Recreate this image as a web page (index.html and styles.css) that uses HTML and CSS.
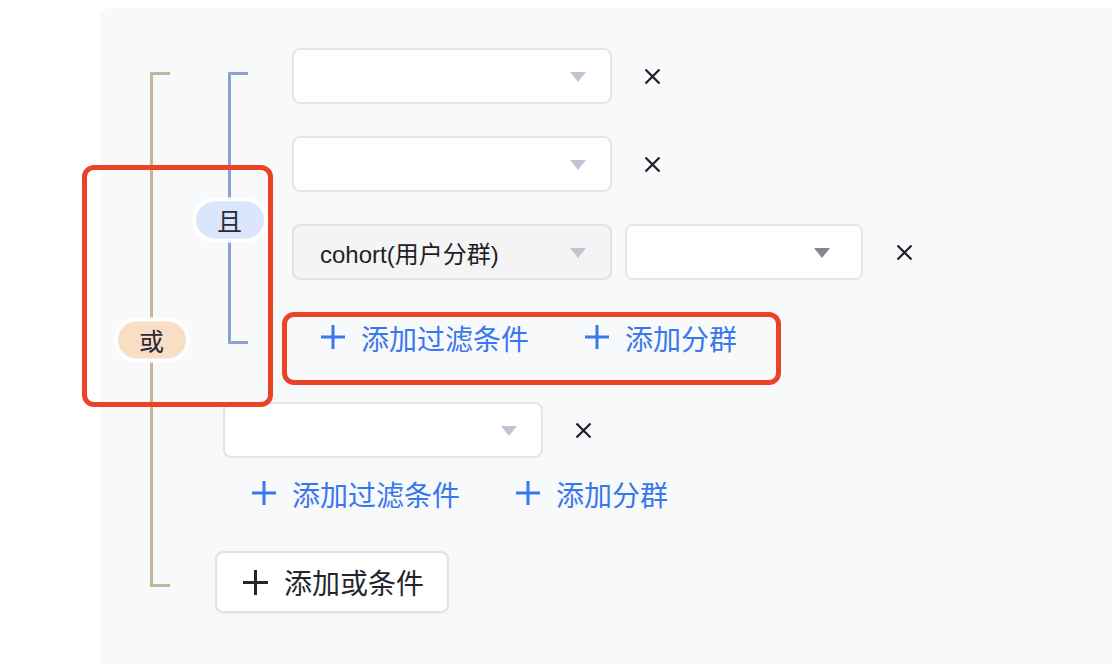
FILE: index.html
```html
<!DOCTYPE html>
<html lang="zh">
<head>
<meta charset="utf-8">
<title>Filter groups</title>
<link rel="stylesheet" href="styles.css">
</head>
<body>
<div class="page">
  <div class="panel">
    <div class="or-group">
      <div class="or-rail"><span class="badge badge-or">或</span></div>
      <div class="or-body">
        <div class="and-group">
          <div class="and-rail"><span class="badge badge-and">且</span></div>
          <div class="and-body">
            <div class="cond-row">
              <div class="select"><span class="select-text"></span><svg class="caret" width="16" height="10" viewBox="0 0 16 10"><polygon points="0,0 16,0 8,10"/></svg></div>
              <svg class="close" width="17" height="17" viewBox="0 0 17 17"><path d="M1.5 1.5 L15.5 15.5 M15.5 1.5 L1.5 15.5"/></svg>
            </div>
            <div class="cond-row">
              <div class="select"><span class="select-text"></span><svg class="caret" width="16" height="10" viewBox="0 0 16 10"><polygon points="0,0 16,0 8,10"/></svg></div>
              <svg class="close" width="17" height="17" viewBox="0 0 17 17"><path d="M1.5 1.5 L15.5 15.5 M15.5 1.5 L1.5 15.5"/></svg>
            </div>
            <div class="cond-row">
              <div class="select select-cohort"><span class="select-text">cohort(用户分群)</span><svg class="caret" width="16" height="10" viewBox="0 0 16 10"><polygon points="0,0 16,0 8,10"/></svg></div>
              <div class="select select-value"><span class="select-text"></span><svg class="caret caret-dark" width="16" height="10" viewBox="0 0 16 10"><polygon points="0,0 16,0 8,10"/></svg></div>
              <svg class="close close-wide" width="17" height="17" viewBox="0 0 17 17"><path d="M1.5 1.5 L15.5 15.5 M15.5 1.5 L1.5 15.5"/></svg>
            </div>
            <div class="link-row link-row-first">
              <a class="link"><svg class="plus" width="24" height="24" viewBox="0 0 24 24"><path d="M12 0 V24 M0 12 H24"/></svg><span>添加过滤条件</span></a>
              <a class="link"><svg class="plus" width="24" height="24" viewBox="0 0 24 24"><path d="M12 0 V24 M0 12 H24"/></svg><span>添加分群</span></a>
            </div>
          </div>
        </div>
        <div class="single-group">
          <div class="cond-row">
            <div class="select"><span class="select-text"></span><svg class="caret" width="16" height="10" viewBox="0 0 16 10"><polygon points="0,0 16,0 8,10"/></svg></div>
            <svg class="close" width="17" height="17" viewBox="0 0 17 17"><path d="M1.5 1.5 L15.5 15.5 M15.5 1.5 L1.5 15.5"/></svg>
          </div>
          <div class="link-row link-row-second">
            <a class="link"><svg class="plus" width="24" height="24" viewBox="0 0 24 24"><path d="M12 0 V24 M0 12 H24"/></svg><span>添加过滤条件</span></a>
            <a class="link"><svg class="plus" width="24" height="24" viewBox="0 0 24 24"><path d="M12 0 V24 M0 12 H24"/></svg><span>添加分群</span></a>
          </div>
        </div>
        <button class="add-or" type="button"><svg class="plus plus-dark" width="25" height="25" viewBox="0 0 25 25"><path d="M12.5 0 V25 M0 12.5 H25"/></svg><span>添加或条件</span></button>
      </div>
    </div>
  </div>
  <div class="annot annot-left"></div>
  <div class="annot annot-links"></div>
</div>
</body>
</html>
```

FILE: styles.css
```css
html, body {
  margin: 0;
  padding: 0;
  background: #ffffff;
}

body {
  font-family: "Liberation Sans", "Noto Sans CJK SC", sans-serif;
  color: #25252f;
}

.page {
  position: relative;
  width: 1112px;
  height: 664px;
  overflow: hidden;
}

.panel {
  box-sizing: border-box;
  margin: 8px 0 0 100px;
  height: 656px;
  background: #f8f9fb;
  border-top-left-radius: 10px;
  padding: 40px 0 0 50px;
}

.or-group {
  display: flex;
  align-items: stretch;
}

.or-rail {
  position: relative;
  flex: none;
  width: 17px;
  margin: 24px 0 26px;
  border: 3px solid #c5b59b;
  border-right: none;
}

.or-body {
  margin-left: 45px;
  display: flex;
  flex-direction: column;
  align-items: flex-start;
}

.and-group {
  display: flex;
  align-items: stretch;
  margin-left: 13px;
}

.and-rail {
  position: relative;
  flex: none;
  width: 17px;
  margin: 24px 0 22px;
  border: 3px solid #8ba3d1;
  border-right: none;
}

.and-body {
  margin-left: 44px;
  display: flex;
  flex-direction: column;
  align-items: flex-start;
}

.badge {
  position: absolute;
  left: -1.5px;
  transform: translate(-50%, -50%);
  width: 68px;
  height: 37px;
  border: 4px solid #ffffff;
  border-radius: 24px;
  display: flex;
  align-items: center;
  justify-content: center;
  font-family: "Noto Sans CJK SC", sans-serif;
  font-size: 25px;
  line-height: 1;
  color: #2a2a38;
}

.badge-and {
  top: 144.5px;
  background: #dbe5fc;
}

.badge-or {
  top: 265px;
  background: #f9dec5;
}

.cond-row {
  display: flex;
  align-items: center;
  height: 56px;
}

.cond-row + .cond-row {
  margin-top: 32px;
}

.select {
  box-sizing: border-box;
  flex: none;
  width: 320px;
  height: 56px;
  border: 2px solid #e4e4ea;
  border-radius: 8px;
  background: #ffffff;
  display: flex;
  align-items: center;
  justify-content: space-between;
  padding: 0 24px 0 26px;
}

.select-text {
  font-size: 24px;
  color: #1f1f2a;
  white-space: nowrap;
}

.select-cohort {
  background: #f4f4f5;
  border-color: #e2e2e6;
}

.select-value {
  width: 238px;
  margin-left: 13px;
  padding-right: 31px;
}

.caret {
  display: block;
  fill: #c5c3d2;
  margin-top: 2px;
}

.caret-dark {
  fill: #85858f;
}

.close {
  display: block;
  flex: none;
  margin-left: 32px;
  stroke: #1f1f27;
  stroke-width: 2.2;
  fill: none;
}

.close-wide {
  margin-left: 33px;
}

.link-row {
  display: flex;
  align-items: center;
  height: 56px;
  padding-left: 29px;
}

.link-row-first {
  margin-top: 30px;
}

.link-row-second {
  margin-top: 8px;
}

.link {
  display: flex;
  align-items: center;
  color: #3977ee;
  font-family: "Noto Sans CJK SC", sans-serif;
  font-size: 28px;
  line-height: 1;
  cursor: pointer;
}

.link + .link {
  margin-left: 56px;
}

.plus {
  display: block;
  flex: none;
  margin-right: 16px;
  margin-top: -3px;
  stroke: #3977ee;
  stroke-width: 3;
  fill: none;
}

.plus-dark {
  stroke: #25252d;
  margin-right: 16px;
  margin-top: 0;
}

.single-group {
  margin-left: 8px;
  margin-top: 36px;
  display: flex;
  flex-direction: column;
  align-items: flex-start;
}

.add-or {
  box-sizing: border-box;
  margin-top: 29px;
  width: 234px;
  height: 62px;
  padding: 0 0 0 26px;
  border: 2px solid #e2e2e8;
  border-radius: 8px;
  background: #ffffff;
  box-shadow: 0 1px 2px rgba(0, 0, 0, 0.06);
  display: flex;
  align-items: center;
  font-family: "Noto Sans CJK SC", sans-serif;
  font-size: 28px;
  line-height: 1;
  color: #25252d;
}

.annot {
  position: absolute;
  box-sizing: border-box;
  border: 5px solid #ec4227;
  border-radius: 12px;
  pointer-events: none;
}

.annot-left {
  left: 82px;
  top: 165px;
  width: 191px;
  height: 242px;
}

.annot-links {
  left: 282px;
  top: 312px;
  width: 499px;
  height: 73px;
}
```
